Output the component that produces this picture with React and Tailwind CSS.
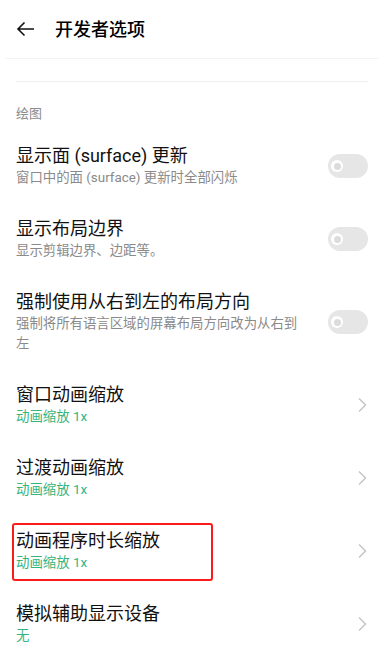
import React from 'react';

const drawing = [
    { title: '显示面 (surface) 更新', sub: '窗口中的面 (surface) 更新时全部闪烁' },
    { title: '显示布局边界', sub: '显示剪辑边界、边距等。' },
    { title: '强制使用从右到左的布局方向', sub: '强制将所有语言区域的屏幕布局方向改为从右到左' },
];

const scales = [
    { title: '窗口动画缩放', value: '动画缩放 1x' },
    { title: '过渡动画缩放', value: '动画缩放 1x' },
    { title: '动画程序时长缩放', value: '动画缩放 1x', marked: true },
    { title: '模拟辅助显示设备', value: '无' },
];

function Toggle() {
    return (
        <div className="w-10 h-6 rounded-full bg-[#e6e6e6] flex items-center pl-[3px] shrink-0">
            <div className="w-3 h-3 rounded-full bg-white flex items-center justify-center">
                <div className="w-[7px] h-[7px] rounded-full bg-[#dcdcdc]" />
            </div>
        </div>
    );
}

function Chevron() {
    return (
        <svg width="10" height="16" viewBox="0 0 10 16" className="shrink-0">
            <path d="M2 1.5 L8.5 8 L2 14.5" fill="none" stroke="#c6c6c6" strokeWidth="1.5" />
        </svg>
    );
}

export default function App() {
    return (
        <div className="w-[384px] min-h-[670px] bg-white font-['Roboto','Noto_Sans_CJK_SC',sans-serif] text-[#111]">
            {/* Header */}
            <div className="h-[58px] flex items-center pl-4">
                <svg width="19" height="16" viewBox="0 0 19 16">
                    <path d="M18 8 H2 M8.5 1.5 L2 8 L8.5 14.5" fill="none" stroke="#111" strokeWidth="1.6" />
                </svg>
                <span className="ml-[20px] text-[18px] font-medium text-black">开发者选项</span>
            </div>
            <div className="mx-[5px] h-px bg-[#f3f3f3]" />
            <div className="h-[22px]" />
            <div className="mx-4 h-px bg-[#efefef]" />

            {/* Section */}
            <div className="px-4 pt-[23px] text-[13px] leading-[18px] text-[#8c8c8c]">绘图</div>
            <div className="h-[6px]" />

            {drawing.map((item) => (
                <div key={item.title} className="flex items-center gap-6 px-4 pt-[15px] pb-[14px]">
                    <div className="flex-1">
                        <div className="text-[18px] leading-[24px]">{item.title}</div>
                        <div className="text-[13.4px] leading-[20px] text-[#8a8a8a]">{item.sub}</div>
                    </div>
                    <Toggle />
                </div>
            ))}

            {scales.map((item) => (
                <div key={item.title} className="relative flex items-center gap-6 pl-4 pr-[17px] pt-[15px] pb-[14px]">
                    <div className="flex-1">
                        <div className="text-[18px] leading-[24px]">{item.title}</div>
                        <div className="text-[13.4px] leading-[20px] text-[#34b57e]">{item.value}</div>
                    </div>
                    <Chevron />
                    {item.marked && (
                        <div className="absolute left-[12px] top-[9px] w-[201px] h-[58px] border-[2px] border-[#ff1a1a] rounded-[3px]" />
                    )}
                </div>
            ))}
        </div>
    );
}
